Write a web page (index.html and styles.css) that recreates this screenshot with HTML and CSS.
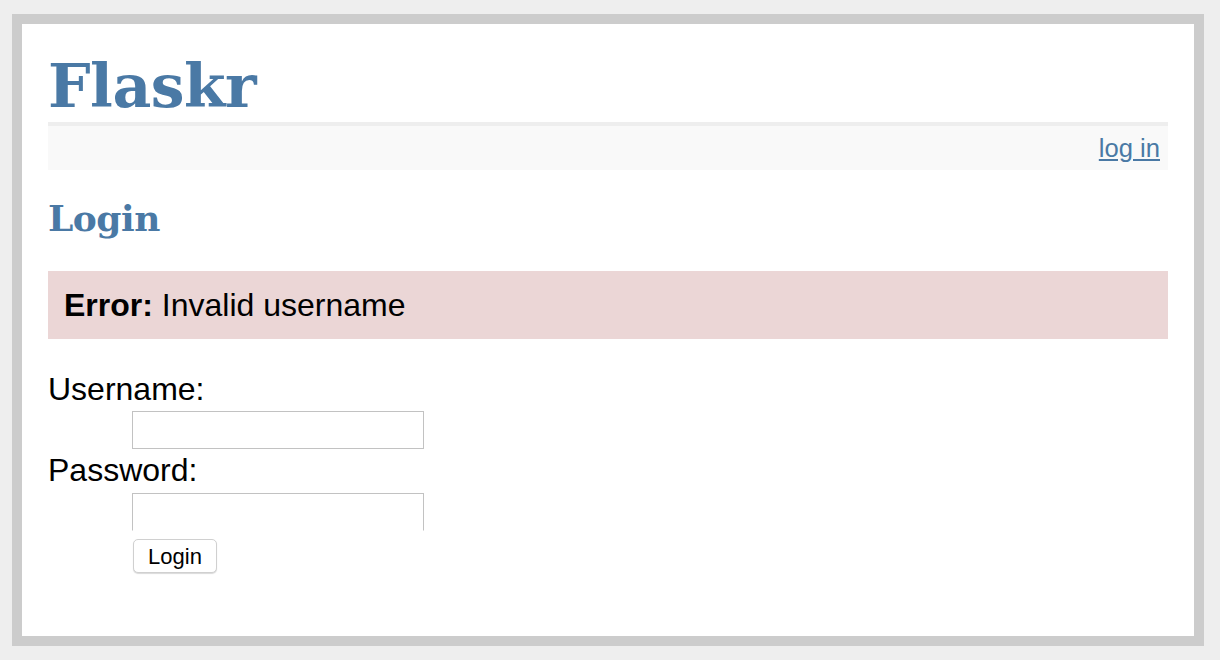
FILE: index.html
```html
<!DOCTYPE html>
<html lang="en">
<head>
    <meta charset="UTF-8">
    <title>Flaskr</title>
    <link rel="stylesheet" href="styles.css">
</head>
<body>
    <div class="page">
        <h1>Flaskr</h1>
        <div class="metanav">
            <a href="#">log in</a>
        </div>
        <h2>Login</h2>
        <p class="error"><strong>Error:</strong> Invalid username</p>
        <form action="#" method="post">
            <dl>
                <dt>Username:</dt>
                <dd><input type="text" name="username"></dd>
                <dt>Password:</dt>
                <dd><input type="password" name="password" class="password"></dd>
                <dd><input type="submit" value="Login" class="submit"></dd>
            </dl>
        </form>
    </div>
</body>
</html>
```

FILE: styles.css
```css
body {
    font-family: 'Liberation Sans', Arial, sans-serif;
    font-size: 32px;
    background: #eee;
    margin: 0;
    padding: 14px 0 0 12px;
}
a, h1, h2 {
    color: #4a79a5;
}
h1, h2 {
    font-family: 'DejaVu Serif', Georgia, serif;
    font-weight: bold;
    margin: 0;
}
h1 {
    font-size: 60px;
    line-height: 72px;
    letter-spacing: -0.5px;
    border-bottom: 4px solid #eee;
}
h2 {
    font-size: 36px;
    line-height: 44px;
    letter-spacing: -0.5px;
}
.page {
    width: 1120px;
    border: 10px solid #ccc;
    padding: 26px;
    background: white;
}
.metanav {
    text-align: right;
    font-size: 25.6px;
    line-height: 29px;
    padding: 7.5px 8px;
    margin-bottom: 26px;
    background: #f9f9f9;
}
.error {
    background: #ebd6d6;
    padding: 16px;
    line-height: 36px;
    margin: 31px 0 32px;
}
dl {
    margin: 0 0 37px;
}
dt {
    line-height: 37px;
}
dd {
    margin: 0 0 0 80px;
}
dd input {
    display: block;
    box-sizing: border-box;
    width: 292px;
    height: 38px;
    margin: 3px 0 3px 4px;
    border: 1px solid #c2c2c2;
    background: white;
    font-size: 22px;
}
dd input.password {
    margin-top: 4px;
    border-bottom-color: transparent;
}
dd input.submit {
    width: 84px;
    height: 34px;
    margin: 8px 0 2px 5px;
    border: 1px solid #d0d0d0;
    border-radius: 5px;
    box-shadow: 0 1px 1px rgba(0, 0, 0, 0.15);
    font-family: 'Liberation Sans', Arial, sans-serif;
    font-size: 22px;
    color: #000;
    padding: 2px 0 0;
}
```
